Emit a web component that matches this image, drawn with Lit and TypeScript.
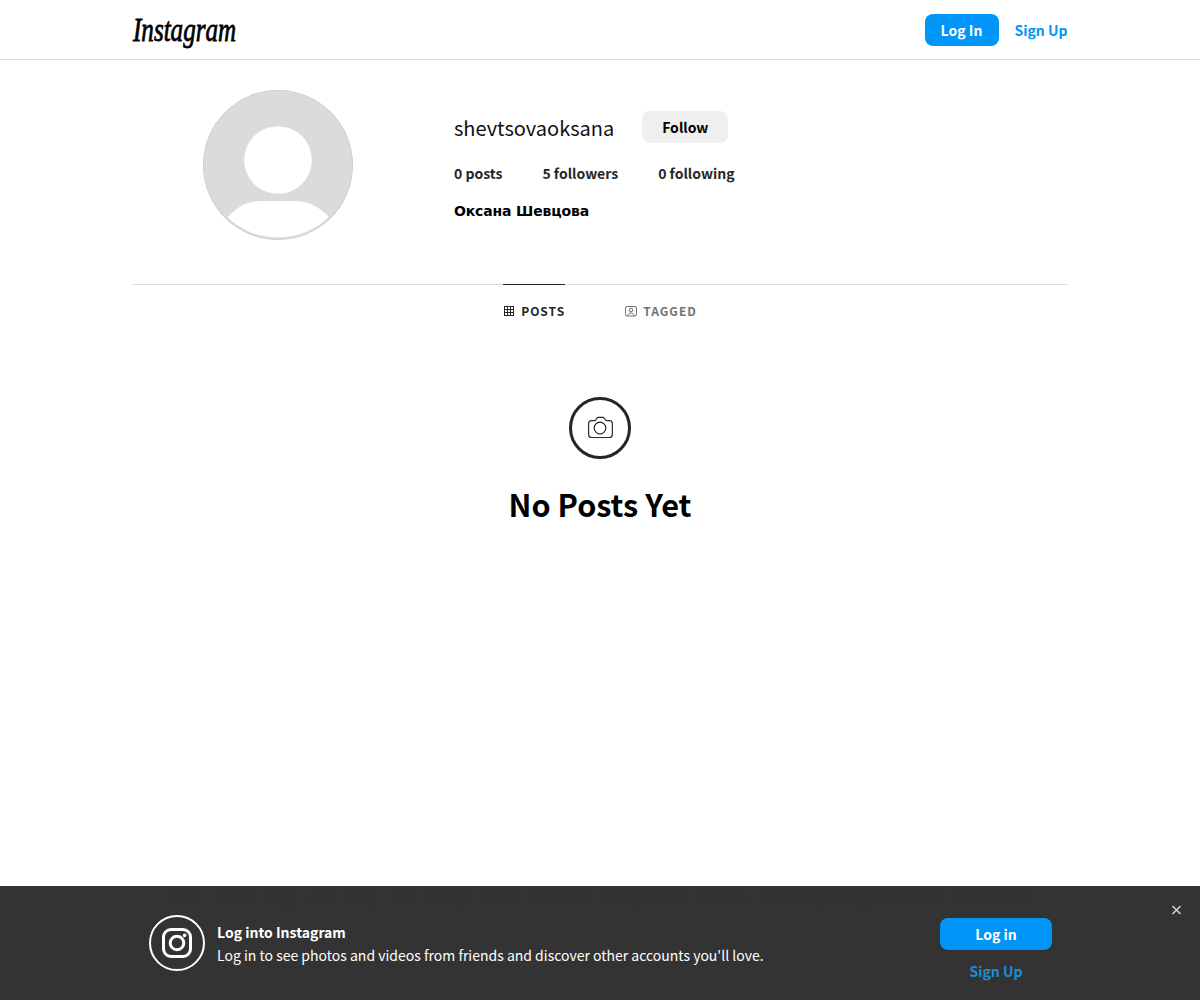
import { LitElement, html, css } from "lit";
import { customElement } from "lit/decorators.js";

@customElement("app-root")
export class AppRoot extends LitElement {
  static styles = css`
    :host {
      display: block;
      position: relative;
      height: 1000px;
      overflow: hidden;
      background: #fff;
      color: #262626;
      font-family: "Noto Sans CJK SC", "Noto Sans", sans-serif;
      font-size: 14px;
    }
    .nav {
      height: 59px;
      border-bottom: 1px solid #dbdbdb;
    }
    .nav-in {
      width: 935px;
      margin: 0 auto;
      height: 100%;
      display: flex;
      align-items: center;
      justify-content: space-between;
    }
    .logo {
      font-family: "Liberation Serif", serif;
      font-style: italic;
      font-weight: 400;
      font-size: 33px;
      line-height: 40px;
      color: #000;
      -webkit-text-stroke: 0.8px #000;
      width: 104px;
      white-space: nowrap;
      margin-top: 1px;
      transform: scaleX(0.76);
      transform-origin: left center;
    }
    .nav-actions {
      display: flex;
      align-items: center;
      gap: 16px;
    }
    .btn {
      display: flex;
      align-items: center;
      justify-content: center;
      font-weight: 700;
      font-size: 14px;
      border-radius: 8px;
      background: #0095f6;
      color: #fff;
      height: 32px;
      box-sizing: border-box;
    }
    .nav-login {
      width: 74px;
    }
    .link {
      color: #0095f6;
      font-weight: 700;
      font-size: 14px;
    }
    main {
      width: 935px;
      margin: 0 auto;
    }
    .profile {
      display: flex;
      padding-top: 30px;
      height: 225px;
      box-sizing: border-box;
      border-bottom: 1px solid #dbdbdb;
    }
    .avatar-col {
      width: 321.5px;
      padding-left: 70px;
      box-sizing: border-box;
      flex: none;
    }
    .avatar {
      display: block;
    }
    .info {
      display: flex;
      flex-direction: column;
      padding-top: 21px;
    }
    .row1 {
      display: flex;
      align-items: center;
      gap: 28px;
      height: 32px;
    }
    .username {
      font-size: 20px;
      color: #111;
    }
    .follow {
      width: 86px;
      height: 32px;
      background: #efefef;
      border-radius: 8px;
      display: flex;
      align-items: center;
      justify-content: center;
      font-weight: 700;
      color: #000;
    }
    .stats {
      display: flex;
      gap: 40px;
      margin-top: 20px;
      line-height: 20px;
      font-size: 14px;
      font-weight: 700;
      color: #262626;
    }
    .fullname {
      font-family: "DejaVu Sans", sans-serif;
      font-weight: 700;
      font-size: 14px;
      line-height: 18px;
      margin-top: 19px;
      color: #000;
      letter-spacing: -0.15px;
    }
    .tabs {
      display: flex;
      justify-content: center;
      gap: 60px;
    }
    .tab {
      display: flex;
      align-items: center;
      gap: 6px;
      height: 52px;
      margin-top: -1px;
      box-sizing: border-box;
      border-top: 1px solid transparent;
      font-size: 12px;
      font-weight: 700;
      letter-spacing: 1px;
      color: #737373;
    }
    .tab.active {
      border-top-color: #262626;
      color: #262626;
    }
    .tab svg {
      display: block;
    }
    .empty {
      display: flex;
      flex-direction: column;
      align-items: center;
      margin-top: 61px;
    }
    .cam {
      display: block;
    }
    .empty h2 {
      margin: 23px 0 0;
      font-size: 30.6px;
      line-height: 44px;
      font-weight: 700;
      color: #000;
    }
    .ghost {
      position: absolute;
      left: 0;
      right: 0;
      top: 888px;
      display: flex;
      justify-content: center;
      gap: 16px;
      font-size: 12px;
      color: #9a9a9a;
      white-space: nowrap;
    }
    .overlay {
      position: absolute;
      left: 0;
      right: 0;
      bottom: 0;
      height: 114px;
      background: rgba(43, 43, 43, 0.96);
      color: #fff;
      display: flex;
      align-items: center;
      padding: 0 148px 0 149px;
      box-sizing: border-box;
    }
    .ig {
      flex: none;
      display: block;
    }
    .copy {
      margin-left: 12px;
      margin-top: 2px;
      flex: 1;
      font-size: 14px;
      line-height: 23px;
    }
    .copy .t {
      font-weight: 700;
    }
    .cta {
      width: 112px;
      display: flex;
      flex-direction: column;
      align-items: center;
      gap: 11px;
      margin-top: 13px;
    }
    .cta .btn {
      width: 112px;
    }
    .cta .link {
      line-height: 20px;
      color: #1a8fd6;
    }
    .close {
      position: absolute;
      top: 17px;
      right: 17px;
      display: block;
    }
  `;

  render() {
    return html`
      <div class="nav">
        <div class="nav-in">
          <div class="logo">Instagram</div>
          <div class="nav-actions">
            <div class="btn nav-login">Log In</div>
            <div class="link">Sign Up</div>
          </div>
        </div>
      </div>
      <main>
        <section class="profile">
          <div class="avatar-col">
            <svg class="avatar" width="150" height="150" viewBox="0 0 150 150">
              <defs>
                <clipPath id="av"><circle cx="75" cy="74.5" r="73"></circle></clipPath>
              </defs>
              <circle cx="75" cy="75" r="75" fill="#c8c8c8"></circle>
              <circle cx="75" cy="75" r="74.4" fill="#dbdbdb"></circle>
              <circle cx="75" cy="70" r="33.8" fill="#fff"></circle>
              <path
                clip-path="url(#av)"
                d="M25 127 C34 117 44 111 58 111 H92 C106 111 116 117 126 127 L126 150 H25 Z"
                fill="#fff"
              ></path>
            </svg>
          </div>
          <div class="info">
            <div class="row1">
              <div class="username">shevtsovaoksana</div>
              <div class="follow">Follow</div>
            </div>
            <div class="stats">
              <span>0 posts</span>
              <span>5 followers</span>
              <span>0 following</span>
            </div>
            <div class="fullname">Оксана Шевцова</div>
          </div>
        </section>
        <nav class="tabs">
          <div class="tab active">
            <svg width="12" height="12" viewBox="0 0 12 12" fill="none" stroke="currentColor" stroke-width="1">
              <rect x="1.5" y="1.5" width="9" height="9"></rect>
              <path d="M4.5 1.5v9M7.5 1.5v9M1.5 4.5h9M1.5 7.5h9"></path>
            </svg>
            <span>POSTS</span>
          </div>
          <div class="tab">
            <svg width="12" height="12" viewBox="0 0 12 12" fill="none" stroke="currentColor" stroke-width="1">
              <rect x="0.5" y="1.5" width="11" height="9.5" rx="1.5"></rect>
              <circle cx="6" cy="5" r="1.8"></circle>
              <path d="M2.7 11c.3-2 1.6-3 3.3-3s3 1 3.3 3"></path>
            </svg>
            <span>TAGGED</span>
          </div>
        </nav>
        <div class="empty">
          <svg class="cam" width="62" height="62" viewBox="0 0 62 62" fill="none" stroke="#262626">
            <circle cx="31" cy="31" r="29.5" stroke-width="3"></circle>
            <path
              stroke-width="1.2"
              transform="translate(31 31) scale(.95) translate(-31 -31)"
              d="M19 26.5c0-1.9 1.3-3.2 3.2-3.2h2.4c1 0 1.7-.4 2.2-1.3l.6-1c.5-.8 1.1-1.2 2-1.2h4.4c.9 0 1.5.4 2 1.2l.6 1c.5.9 1.2 1.3 2.2 1.3h2.2c1.9 0 3.2 1.3 3.2 3.2v11.3c0 1.9-1.3 3.2-3.2 3.2H22.2c-1.9 0-3.2-1.3-3.2-3.2Z"
            ></path>
            <circle cx="31" cy="31" r="5.8" stroke-width="1.2"></circle>
          </svg>
          <h2>No Posts Yet</h2>
        </div>
      </main>
      <div class="ghost">
        <span>Meta</span><span>About</span><span>Blog</span><span>Jobs</span><span>Help</span><span>API</span><span>Privacy</span><span>Terms</span><span>Locations</span><span>Instagram Lite</span><span>Threads</span><span>Contact Uploading &amp; Non-Users</span><span>Meta Verified</span>
      </div>
      <aside class="overlay">
        <svg class="ig" width="56" height="56" viewBox="0 0 56 56" fill="none" stroke="#fff">
          <circle cx="28" cy="28" r="27" stroke-width="2"></circle>
          <rect x="14.5" y="14.5" width="27" height="27" rx="7.5" stroke-width="3"></rect>
          <circle cx="28" cy="28" r="6.8" stroke-width="3"></circle>
          <circle cx="35.6" cy="20.4" r="1.8" fill="#fff" stroke="none"></circle>
        </svg>
        <div class="copy">
          <div class="t">Log into Instagram</div>
          <div>Log in to see photos and videos from friends and discover other accounts you'll love.</div>
        </div>
        <div class="cta">
          <div class="btn">Log in</div>
          <div class="link">Sign Up</div>
        </div>
        <svg class="close" width="13" height="13" viewBox="0 0 13 13" fill="none" stroke="#d0d0d0" stroke-width="1.6">
          <path d="M2.5 3l8 8M10.5 3l-8 8"></path>
        </svg>
      </aside>
    `;
  }
}
